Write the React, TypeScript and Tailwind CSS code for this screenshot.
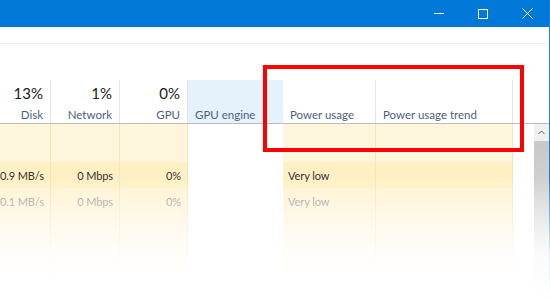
import React from 'react';

// column layout of the process table (only the visible slice)
const cols = [
  { key: 'disk', w: 'w-[51px]', pct: '13%', label: 'Disk', align: 'right', tint: true },
  { key: 'net', w: 'w-[69px]', pct: '1%', label: 'Network', align: 'right', tint: true },
  { key: 'gpu', w: 'w-[68px]', pct: '0%', label: 'GPU', align: 'right', tint: true },
  { key: 'eng', w: 'w-[95px]', pct: '', label: 'GPU engine', align: 'left', tint: false, active: true },
  { key: 'pow', w: 'w-[93px]', pct: '', label: 'Power usage', align: 'left', tint: true },
  { key: 'trend', w: 'w-[137px]', pct: '', label: 'Power usage trend', align: 'left', tint: true },
];

const rows = [
  { h: 'h-[38px]', bg: 'bg-[#fdf5dc]', text: '', values: {} as Record<string, string> },
  { h: 'h-[26px]', bg: 'bg-[#fff0c4]', text: 'text-[#333333]', values: { disk: '0.9 MB/s', net: '0 Mbps', gpu: '0%', pow: 'Very low' } },
  { h: 'h-[26px]', bg: 'bg-[#fff3d2]', text: 'text-[#9a9a9a]', values: { disk: '0.1 MB/s', net: '0 Mbps', gpu: '0%', pow: 'Very low' } },
  { h: 'h-[60px]', bg: 'bg-[#fff4d8]', text: '', values: {} as Record<string, string> },
];

function WindowButtons() {
  return (
    <div className="flex h-full">
      <div className="w-[44px] h-full flex items-center justify-center">
        <svg width="10" height="10" viewBox="0 0 10 10"><path d="M0 4.5H10" stroke="white" strokeWidth="1" /></svg>
      </div>
      <div className="w-[44px] h-full flex items-center justify-center">
        <svg width="10" height="10" viewBox="0 0 10 10"><rect x="0.5" y="0.5" width="9" height="9" fill="none" stroke="white" strokeWidth="1" /></svg>
      </div>
      <div className="w-[44px] h-full flex items-center justify-center">
        <svg width="11" height="11" viewBox="0 0 11 11"><path d="M0.5 0.5L10.5 10.5M10.5 0.5L0.5 10.5" stroke="white" strokeWidth="1" /></svg>
      </div>
    </div>
  );
}

export default function App() {
  return (
    <div className="relative w-[550px] h-[301px] overflow-hidden bg-white flex font-['Lato','Noto_Sans',sans-serif]">
      <div className="w-[549px] h-full flex flex-col">
        {/* TITLE BAR */}
        <div className="h-[27px] bg-[#0078d7] flex justify-end shrink-0">
          <WindowButtons />
        </div>

        {/* TAB STRIP */}
        <div className="h-[17px] border-b border-[#f0f0f0] shrink-0" />
        <div className="h-[36px] shrink-0" />

        {/* HEADER */}
        <div className="flex h-[44px] border-b border-[#bcbcbc] shrink-0">
          {cols.map((c) => (
            <div
              key={c.key}
              className={`${c.w} h-full border-r border-[#e5e5e5] flex flex-col justify-end ${c.align === 'right' ? 'items-end pr-[7px]' : 'items-start pl-[7px]'} ${c.active ? 'bg-[#e5f1fb] border-r-[#e5f1fb]' : ''}`}
            >
              {c.pct && <span className="text-[15px] leading-[20px] text-[#1a1a1a] mb-[3px]">{c.pct}</span>}
              <span className="text-[11.5px] leading-[17px] text-[#4d6082] whitespace-nowrap">{c.label}</span>
            </div>
          ))}
          <div className="flex-1" />
        </div>

        {/* BODY */}
        <div className="flex flex-1">
          <div className="flex flex-col">
            {rows.map((r, i) => (
              <div key={i} className={`flex ${r.h}`}>
                {cols.map((c) => (
                  <div
                    key={c.key}
                    className={`${c.w} shrink-0 h-full flex items-center pt-[2px] text-[11px] tracking-[-0.1px] whitespace-nowrap ${r.text} ${c.tint ? `${r.bg} border-r border-[#f3e6bd]` : 'bg-white'} ${c.align === 'right' ? 'justify-end pr-[6px]' : 'justify-start pl-[5px]'}`}
                  >
                    {r.values[c.key] || ''}
                  </div>
                ))}
              </div>
            ))}
          </div>
          <div className="flex-1" />
          {/* SCROLLBAR */}
          <div className="w-[15px] flex flex-col">
            <div className="h-[17px] bg-[#f0f0f0] flex items-center justify-center">
              <svg width="7" height="5" viewBox="0 0 7 5"><path d="M0.5 4L3.5 1L6.5 4" fill="none" stroke="#606060" strokeWidth="1" /></svg>
            </div>
            <div className="flex-1 bg-linear-to-b from-[#c8c8c8] to-[#e8e8e8]" />
          </div>
        </div>
      </div>
      <div className="w-px h-full bg-[#1883d7]" />

      {/* fade out toward the bottom */}
      <div className="absolute inset-x-0 top-[178px] bottom-0 bg-linear-to-b from-white/0 via-white/85 via-60% to-white pointer-events-none" />

      {/* annotation box */}
      <div className="absolute left-[263px] top-[65px] w-[261px] h-[87px] border-4 border-[#ff0000] pointer-events-none" />
    </div>
  );
}
